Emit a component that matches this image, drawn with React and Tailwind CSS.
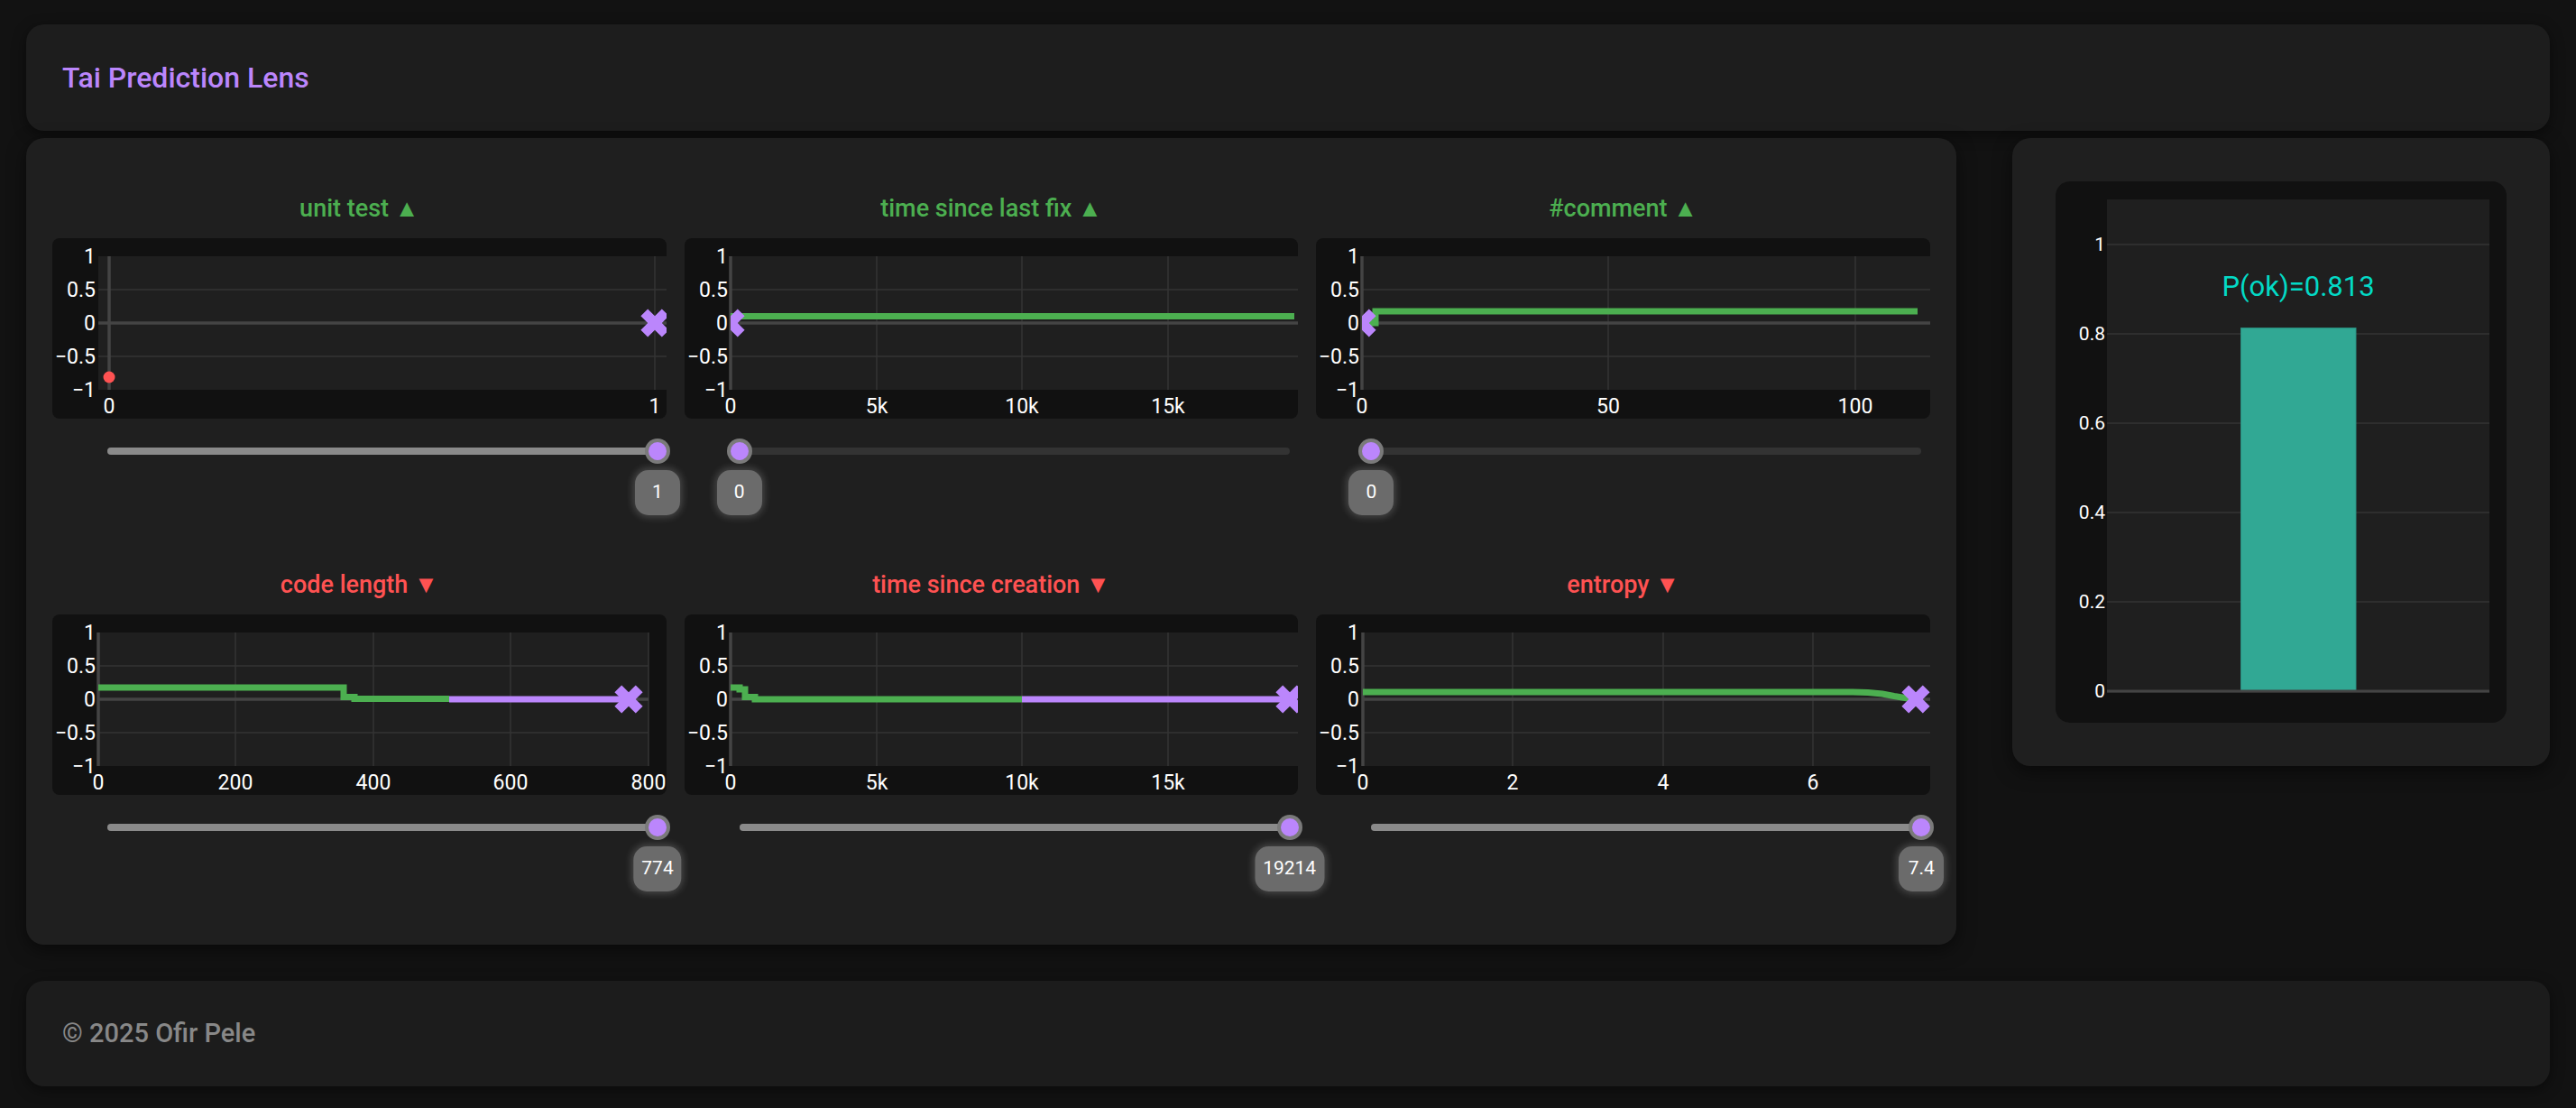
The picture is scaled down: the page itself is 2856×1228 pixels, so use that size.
import React from 'react';

const GREEN = '#4caf50';
const RED = '#ff5252';
const PURPLE = '#bb86fc';

// chart coords are inside a 681x200 box; plot area y: 20..168, value v -> 94 - v*74
const features = [
  {
    name: 'unit test', up: true, value: '1', pct: 100,
    zeroX: 63,
    ticks: [{ x: 63, label: '0' }, { x: 668, label: '1' }],
    dot: { x: 63, y: 154 },
    marker: { x: 668, y: 94 },
  },
  {
    name: 'time since last fix', up: true, value: '0', pct: 0,
    zeroX: 51,
    ticks: [{ x: 51, label: '0' }, { x: 213, label: '5k' }, { x: 374, label: '10k' }, { x: 536, label: '15k' }],
    green: 'M51 86.5 H676',
    marker: { x: 51, y: 94 },
  },
  {
    name: '#comment', up: true, value: '0', pct: 0,
    zeroX: 51,
    ticks: [{ x: 51, label: '0' }, { x: 324, label: '50' }, { x: 598, label: '100' }],
    green: 'M51 94 H66 V81 H667',
    marker: { x: 51, y: 94 },
  },
  {
    name: 'code length', up: false, value: '774', pct: 100,
    zeroX: 51, plotRight: 661,
    ticks: [{ x: 51, label: '0' }, { x: 203, label: '200' }, { x: 356, label: '400' }, { x: 508, label: '600' }, { x: 661, label: '800' }],
    green: 'M51 81 H323 V91.5 H335 V93.5 H440',
    purple: 'M440 94 H639',
    marker: { x: 639, y: 94 },
  },
  {
    name: 'time since creation', up: false, value: '19214', pct: 100,
    zeroX: 51,
    ticks: [{ x: 51, label: '0' }, { x: 213, label: '5k' }, { x: 374, label: '10k' }, { x: 536, label: '15k' }],
    green: 'M51 81 H61 V83 H67 V91.5 H78 V94 H374',
    purple: 'M374 94 H671',
    marker: { x: 671, y: 94 },
  },
  {
    name: 'entropy', up: false, value: '7.4', pct: 100,
    zeroX: 52,
    ticks: [{ x: 52, label: '0' }, { x: 218, label: '2' }, { x: 385, label: '4' }, { x: 551, label: '6' }],
    green: 'M52 86 H595 L612 86.5 L628 88 L641 90.5 L662 94',
    marker: { x: 665, y: 94 },
  },
];

function xMarker(cx, cy, a) {
  // plotly-like "x" symbol
  return `M${cx},${cy + a} l${a},${a} l${a},${-a} l${-a},${-a} l${a},${-a} l${-a},${-a} l${-a},${a} l${-a},${-a} l${-a},${a} l${a},${a} l${-a},${a} l${a},${a} Z`;
}

function FeatureChart({ f, idx }) {
  const left = 51;
  const right = f.plotRight || 681;
  const clip = `plot-clip-${idx}`;
  const yTicks = [
    { y: 20, label: '1' },
    { y: 57, label: '0.5' },
    { y: 94, label: '0' },
    { y: 131, label: '\u22120.5' },
    { y: 168, label: '\u22121' },
  ];
  return (
    <div className="h-[200px] rounded-[8px] bg-[#111111] overflow-hidden">
      <svg width="681" height="200" className="block">
        <defs>
          <clipPath id={clip}>
            <rect x={left} y={20} width={right - left} height={148} />
          </clipPath>
        </defs>
        <rect x={left} y={20} width={right - left} height={148} fill="#1f1f1f" />
        {/* grid */}
        {[57, 131].map((y) => (
          <line key={y} x1={left} x2={right} y1={y} y2={y} stroke="#353535" strokeWidth="1.5" />
        ))}
        {f.ticks.filter((t) => t.x !== f.zeroX).map((t) => (
          <line key={t.label} x1={t.x} x2={t.x} y1={20} y2={168} stroke="#353535" strokeWidth="1.5" />
        ))}
        <line x1={f.zeroX} x2={f.zeroX} y1={20} y2={168} stroke="#444" strokeWidth="3.5" />
        <line x1={left} x2={right} y1={94} y2={94} stroke="#444" strokeWidth="3.5" />
        <g clipPath={`url(#${clip})`}>
          {f.green && <path d={f.green} fill="none" stroke={GREEN} strokeWidth="7" />}
          {f.purple && <path d={f.purple} fill="none" stroke={PURPLE} strokeWidth="7" />}
          {f.dot && <circle cx={f.dot.x} cy={f.dot.y} r="6.5" fill={RED} />}
          <path d={xMarker(f.marker.x, f.marker.y, 7.8)} fill={PURPLE} />
        </g>
        {/* tick labels */}
        {yTicks.map((t) => (
          <text key={t.label} x={48} y={t.y} textAnchor="end" dominantBaseline="central" fill="#fff" fontSize="23">
            {t.label}
          </text>
        ))}
        {f.ticks.map((t) => (
          <text key={t.label} x={t.x} y={186} textAnchor="middle" dominantBaseline="central" fill="#fff" fontSize="23">
            {t.label}
          </text>
        ))}
      </svg>
    </div>
  );
}

function ValueSlider({ pct, label }) {
  return (
    <>
      <div className="relative ml-[61px] mt-[22px] h-[28px] w-[610px]">
        <div className="absolute inset-x-0 top-[10px] h-[8px] rounded-full bg-[#333333]" />
        <div className="absolute left-0 top-[10px] h-[8px] rounded-full bg-[#8a8a8a]" style={{ width: `${pct}%` }} />
        <div
          className="absolute top-0 flex h-[28px] w-[28px] -translate-x-1/2 items-center justify-center rounded-full bg-[#7a7a7a]"
          style={{ left: `${pct}%` }}
        >
          <div className="h-[20px] w-[20px] rounded-full bg-[#bb86fc]" />
        </div>
      </div>
      <div className="relative ml-[61px] mt-[7px] h-[50px] w-[610px]">
        <div
          className="absolute top-0 flex h-[50px] min-w-[50px] -translate-x-1/2 items-center justify-center rounded-[15px] bg-[#6b6b6b] px-[9px] text-[21px] text-white shadow-[0_0_8px_2px_rgba(255,255,255,0.2)]"
          style={{ left: `${pct}%` }}
        >
          {label}
        </div>
      </div>
    </>
  );
}

function FeatureCell({ f, idx }) {
  return (
    <div className="flex flex-col">
      <div
        className={`flex h-[44px] items-center justify-center text-[27px] font-medium ${f.up ? 'text-[#4caf50]' : 'text-[#ff5252]'}`}
      >
        {f.name} {f.up ? '\u25B2' : '\u25BC'}
      </div>
      <div className="mt-[11px]">
        <FeatureChart f={f} idx={idx} />
      </div>
      <ValueSlider pct={f.pct} label={f.value} />
    </div>
  );
}

function ProbabilityChart({ p }) {
  const zero = 565;
  const unit = 495;
  const top = zero - p * unit;
  const ticks = [0, 0.2, 0.4, 0.6, 0.8, 1];
  return (
    <div className="h-[600px] rounded-[16px] bg-[#111111] overflow-hidden">
      <svg width="500" height="600" className="block">
        <rect x={57} y={20} width={424} height={547} fill="#1f1f1f" />
        {ticks.map((t) => {
          const y = zero - t * unit;
          return (
            <g key={t}>
              {t !== 0 && <line x1={57} x2={481} y1={y} y2={y} stroke="#353535" strokeWidth="1.5" />}
              <text x={55} y={y} textAnchor="end" dominantBaseline="central" fill="#fff" fontSize="21">
                {t === 0 ? '0' : t === 1 ? '1' : String(t)}
              </text>
            </g>
          );
        })}
        <rect x={205.5} y={top} width={127.5} height={zero - top} fill="#31a894" stroke="#2a8f80" strokeWidth="1" />
        <line x1={57} x2={481} y1={zero} y2={zero} stroke="#444" strokeWidth="3" />
        <text x={269} y={116} textAnchor="middle" dominantBaseline="central" fill="#03dac6" fontSize="31">
          P(ok)={p.toFixed(3)}
        </text>
      </svg>
    </div>
  );
}

export default function App() {
  return (
    <div className="min-h-screen bg-[#121212] px-[29px] pt-[27px] pb-[24px] font-['Roboto',sans-serif]">
      <header className="flex h-[118px] items-center rounded-[20px] bg-[#1d1d1d] px-[40px] shadow-[0_4px_16px_rgba(0,0,0,0.45)]">
        <h1 className="text-[32px] font-medium text-[#bb86fc]">Tai Prediction Lens</h1>
      </header>

      <div className="mt-[8px] flex items-start gap-[62px]">
        <main className="grid w-[2140px] grid-cols-3 gap-x-[20px] gap-y-[55px] rounded-[20px] bg-[#1f1f1f] px-[29px] pt-[56px] pb-[59px] shadow-[0_6px_20px_rgba(0,0,0,0.5)]">
          {features.map((f, i) => (
            <FeatureCell key={f.name} f={f} idx={i} />
          ))}
        </main>

        <aside className="w-[596px] rounded-[20px] bg-[#1f1f1f] p-[48px] shadow-[0_6px_20px_rgba(0,0,0,0.5)]">
          <ProbabilityChart p={0.813} />
        </aside>
      </div>

      <footer className="mt-[40px] flex h-[117px] items-center rounded-[20px] bg-[#1c1c1c] px-[40px] shadow-[0_4px_16px_rgba(0,0,0,0.45)]">
        <span className="text-[29px] font-medium text-[#888888]">© 2025 Ofir Pele</span>
      </footer>
    </div>
  );
}
